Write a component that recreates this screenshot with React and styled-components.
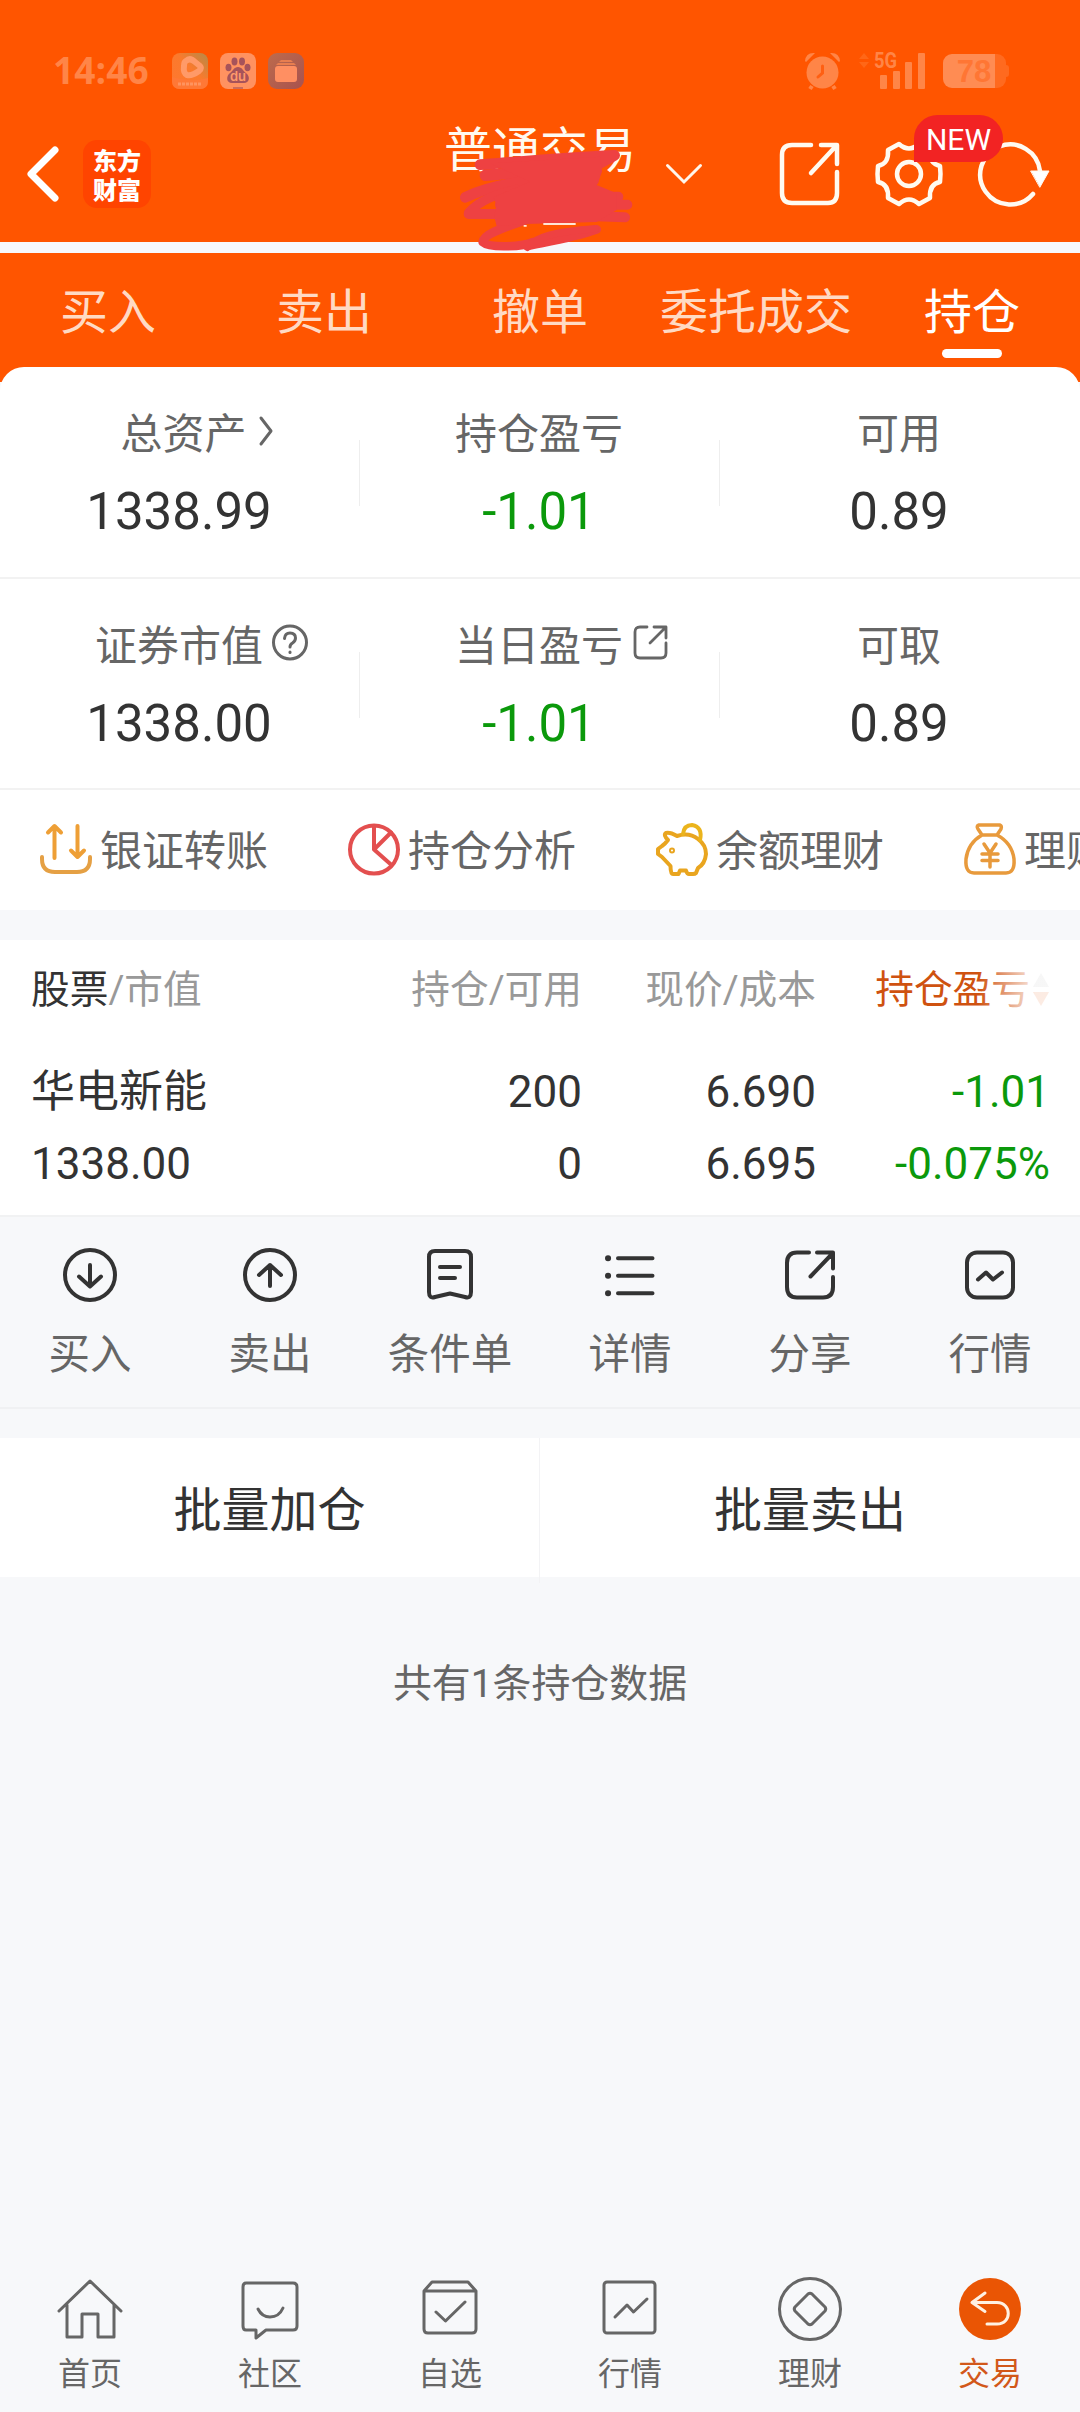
import React from "react";
import styled, { createGlobalStyle } from "styled-components";

const GlobalStyle = createGlobalStyle`
    * {
        box-sizing: border-box;
    }

    body {
        margin: 0;
        background: #f7f8fa;
        color: #333;
        font-family: Roboto, "Noto Sans CJK SC", sans-serif;
    }

    svg {
        display: block;
        flex: none;
        overflow: visible;
    }
`;

const Page = styled.div`
    width: 1080px;
    height: 2412px;
    display: flex;
    flex-direction: column;
    overflow: hidden;
    background: #f7f8fa;
`;

const Header = styled.header`
    height: 242px;
    flex: none;
    background: #ff5500;
    color: #fff;
`;

const StatusBar = styled.div`
    height: 106px;
    padding: 35px 74px 0 53px;
    display: flex;
    align-items: center;
`;

const Clock = styled.span`
    width: 119px;
    padding-bottom: 2px;
    font: 700 37px/36px "Open Sans", sans-serif;
    letter-spacing: 0.1px;
    color: #ff8547;
`;

const AppIcons = styled.div`
    display: flex;
    gap: 12px;
    margin-right: auto;
`;

const StatusIcons = styled.div`
    display: flex;
    align-items: center;
    gap: 17px;
`;

const Battery = styled.div`
    position: relative;
    width: 63px;
    height: 34px;
    padding-right: 1px;
    border-radius: 9px;
    background: linear-gradient(to right, #ff8c53 52px, #ff6a1f 52px);
    color: #ff7634;
    font: 700 31px/35px "Liberation Sans", sans-serif;
    text-align: center;

    &::after {
        content: "";
        position: absolute;
        right: -3px;
        top: 11px;
        width: 3px;
        height: 12px;
        border-radius: 0 3px 3px 0;
        background: #ff6a1f;
    }
`;

const Toolbar = styled.div`
    height: 136px;
    display: grid;
    grid-template-columns: 444px 192px 1fr;
    align-items: center;
`;

const ToolbarLeft = styled.div`
    display: flex;
    align-items: center;
    gap: 24px;
    padding-left: 26px;
`;

const Logo = styled.div`
    width: 68px;
    height: 68px;
    padding-top: 5px;
    border-radius: 14px;
    background: #ff4400;
    font: 900 24px/29px "Noto Sans CJK SC", sans-serif;
    text-align: center;
`;

const Title = styled.div`
    position: relative;
    height: 100px;
    padding-top: 2px;
    font-size: 48px;
    line-height: 50px;
    white-space: nowrap;
    color: #fffaf0;
`;

const Scribble = styled.svg`
    position: absolute;
    left: -14px;
    top: -14px;
    z-index: 2;
`;

const ToolbarRight = styled.div`
    display: flex;
    align-items: center;
    padding-left: 30px;
`;

const ToolIcons = styled.div`
    display: flex;
    align-items: center;
    gap: 36px;
    margin-left: 78px;
`;

const Settings = styled.div`
    position: relative;
`;

const NewBadge = styled.span`
    position: absolute;
    left: 38px;
    top: -26px;
    z-index: 1;
    width: 89px;
    height: 47px;
    border-radius: 24px 24px 24px 0;
    background: #f22323;
    font-size: 30px;
    line-height: 49px;
    text-align: center;
`;

const Strip = styled.div`
    height: 11px;
    flex: none;
    background: #f7f8fb;
`;

const Tabs = styled.nav`
    height: 129px;
    flex: none;
    display: grid;
    grid-template-columns: repeat(5, 1fr);
    background: #ff5500;
`;

const Tab = styled.div`
    display: flex;
    flex-direction: column;
    align-items: center;
    padding-top: 30px;
    font-size: 48px;
    line-height: 60px;
    color: ${(props) => (props.$active ? "#fff" : "#ffdac4")};

    &::after {
        content: "";
        width: 60px;
        height: 9px;
        margin-top: 6px;
        border-radius: 5px;
        background: ${(props) => (props.$active ? "#fff" : "transparent")};
    }
`;

const Card = styled.section`
    flex: none;
    margin-top: -15px;
    border-radius: 24px 24px 0 0;
    background: #fff;
`;

const StatRow = styled.div`
    height: 211.5px;
    display: grid;
    grid-template-columns: 360px 360px 360px;
    border-bottom: 2px solid #f2f2f2;
`;

const Stat = styled.div`
    display: flex;
    flex-direction: column;
    align-items: center;
    padding-top: 43px;
    background: ${(props) =>
        props.$last
            ? "none"
            : "linear-gradient(#eee, #eee) right 73px / 1px 66px no-repeat"};
`;

const StatLabel = styled.div`
    position: relative;
    padding-left: ${(props) => props.$shift || 0}px;
    margin-right: 2px;
    font-size: 42px;
    line-height: 50px;
    color: #666;

    svg {
        position: absolute;
        left: calc(100% + 9px);
        top: 3px;
    }
`;

const StatValue = styled.div`
    margin-top: 22px;
    margin-right: 2px;
    font-size: 51px;
    line-height: 60px;
    color: ${(props) => (props.$down ? "#0b990b" : "#333")};
`;

const Shortcuts = styled.div`
    height: 120px;
    display: flex;
    align-items: center;
    gap: 80px;
    padding: 0 0 2px 40px;
    overflow: hidden;
`;

const Shortcut = styled.div`
    flex: none;
    display: flex;
    align-items: center;
    gap: 8px;
    font-size: 42px;
    line-height: 50px;
    color: #666;

    span {
        padding-top: 5px;
    }
`;

const Holdings = styled.section`
    flex: none;
    height: 277px;
    margin-top: 30px;
    border-bottom: 2px solid #f1f2f3;
    background: #fff;
`;

const HoldingGrid = styled.div`
    display: grid;
    grid-template-columns: 250px 301px 234px 234px;
    padding-left: 31px;
    text-align: right;

    > :first-child {
        text-align: left;
    }
`;

const HoldingHead = styled(HoldingGrid)`
    padding-top: 25px;
    font-size: 38.7px;
    line-height: 50px;
    color: #999;

    b {
        font-weight: 400;
        color: #333;
    }
`;

const SortHead = styled.div`
    position: relative;
    display: flex;
    align-items: center;
    justify-content: flex-end;
    gap: 2px;
    color: #cf5210;

    &::after {
        content: "";
        position: absolute;
        right: -4px;
        top: 0;
        width: 76px;
        height: 50px;
        background: linear-gradient(
            to right,
            rgba(255, 255, 255, 0),
            rgba(255, 255, 255, 0.88) 75%
        );
    }
`;

const HoldingBody = styled(HoldingGrid)`
    padding-top: 41px;
    font-size: 44px;
    line-height: 72px;
`;

const Cell = styled.div`
    color: ${(props) => (props.$down ? "#0b990b" : "#333")};
`;

const Actions = styled.div`
    flex: none;
    height: 192px;
    display: grid;
    grid-template-columns: repeat(6, 1fr);
    border-bottom: 2px solid #f0f1f3;
    font-size: 41.5px;
    line-height: 50px;
    color: #666;
`;

const Action = styled.div`
    display: flex;
    flex-direction: column;
    align-items: center;
    gap: 30px;
    padding-top: 29px;
`;

const Batch = styled.div`
    flex: none;
    height: 139px;
    margin-top: 29px;
    display: grid;
    grid-template-columns: 1fr 1fr;
    background: #fff;
    font-size: 48px;
    line-height: 145px;
    text-align: center;

    div:first-child {
        border-right: 1px solid #f3f3f5;
    }
`;

const Summary = styled.p`
    margin: 82px 0 auto;
    font-size: 38.9px;
    line-height: 50px;
    text-align: center;
    color: #666;
`;

const BottomNav = styled.nav`
    flex: none;
    height: 135px;
    display: grid;
    grid-template-columns: repeat(6, 1fr);
    font-size: 32px;
    line-height: 40px;
`;

const NavItem = styled.div`
    display: flex;
    flex-direction: column;
    align-items: center;
    gap: 13px;
    color: ${(props) => (props.$active ? "#d2581a" : "#666")};
`;

const Icon = ({ size = 54, width = 4, color = "currentColor", children }) => (
    <svg
        width={size}
        height={size}
        viewBox={`0 0 ${size} ${size}`}
        fill="none"
        stroke={color}
        strokeWidth={width}
        strokeLinecap="round"
        strokeLinejoin="round"
    >
        {children}
    </svg>
);

const VideoApp = () => (
    <svg width="36" height="36" viewBox="0 0 36 36">
        <defs>
            <linearGradient id="video" x1="0" y1="1" x2="1" y2="0">
                <stop offset="0" stopColor="#ff7730" />
                <stop offset="0.55" stopColor="#fb7a2c" />
                <stop offset="1" stopColor="#b58a48" />
            </linearGradient>
        </defs>
        <rect width="36" height="36" rx="8" fill="url(#video)" />
        <path
            d="M14 8Q18 4 23 9L28 13Q30 15 27 18Q20 23 15 22Q11 20 12 13Q12 9 14 8Z"
            fill="none"
            stroke="#ff9a68"
            strokeWidth="6"
            strokeLinejoin="round"
        />
        <path d="M0 24Q18 30 36 25V28Q36 36 28 36H8Q0 36 0 28Z" fill="#ff7836" />
        <path
            d="M6 31H30"
            stroke="#ff935f"
            strokeWidth="3"
            strokeDasharray="3 1"
        />
    </svg>
);

const BaiduApp = () => (
    <svg width="36" height="36" viewBox="0 0 36 36">
        <rect width="36" height="36" rx="8" fill="#ff9260" />
        <g fill="#a7535a">
            <ellipse cx="14.5" cy="8.5" rx="3" ry="4" />
            <ellipse cx="22" cy="8.5" rx="3" ry="4" />
            <ellipse cx="8.5" cy="14.5" rx="3" ry="3.8" />
            <ellipse cx="27.5" cy="14.5" rx="3" ry="3.8" />
            <path d="M18 14C22 14 23 18 26 20C31 24 29 30 24 30H12C6 30 6 23 10 20C13 18 14 14 18 14Z" />
            <path d="M13 34H23V36H13Z" opacity="0.6" />
        </g>
        <text
            x="18"
            y="28"
            textAnchor="middle"
            fontFamily="Inter"
            fontWeight="600"
            fontSize="13"
            fill="#ff9a6b"
        >
            du
        </text>
    </svg>
);

const FilesApp = () => (
    <svg width="36" height="36" viewBox="0 0 36 36">
        <defs>
            <linearGradient id="files" x1="0" y1="0" x2="1" y2="1">
                <stop offset="0" stopColor="#bd6b4c" />
                <stop offset="1" stopColor="#a8524f" />
            </linearGradient>
        </defs>
        <rect width="36" height="36" rx="9" fill="url(#files)" />
        <path d="M13 7H23L25 9H11ZM10 10H26L28 12H8Z" fill="#e87e50" />
        <rect x="7" y="13" width="22" height="16" rx="3" fill="#ff8f62" />
    </svg>
);

const AlarmIcon = () => (
    <svg width="38" height="38" viewBox="0 0 38 38">
        <g fill="#ff8547">
            <circle cx="18.5" cy="20.5" r="16" />
            <path d="M1 9Q2 0 11 1L2 10ZM36 9Q35 0 26 1L35 10Z" />
        </g>
        <path d="M8 34L6 37M29 34L31 37" stroke="#ff8547" strokeWidth="4" />
        <path
            d="M18.5 14V21L14 25"
            fill="none"
            stroke="#ff5f12"
            strokeWidth="3"
            strokeLinecap="round"
        />
    </svg>
);

const SignalIcon = () => (
    <svg width="67" height="38" viewBox="0 0 67 38">
        <path d="M0 7L5 1L10 7ZM0 10L5 16L10 10Z" fill="#ff6717" />
        <text
            x="15"
            y="16"
            fontFamily="Roboto"
            fontWeight="700"
            fontSize="22"
            textLength="23"
            lengthAdjust="spacingAndGlyphs"
            fill="#ff8547"
        >
            5G
        </text>
        <g fill="#ff8547">
            <rect x="21" y="23" width="7" height="14" rx="1" />
            <rect x="34" y="19" width="7" height="18" rx="1" />
            <rect x="46" y="10" width="7" height="27" rx="1" />
            <rect x="59" y="1" width="7" height="36" rx="1" />
        </g>
    </svg>
);

// hand-drawn mark that hides the account number under the title
const AccountScribble = () => (
    <Scribble width="300" height="150" viewBox="0 0 900 450">
        <g
            fill="none"
            stroke="#ee4142"
            strokeLinecap="round"
            strokeLinejoin="round"
        >
            <path d="M150 164C280 154 390 144 554 136L510 160" strokeWidth="32" />
            <path d="M166 196L500 168L490 210L300 200" strokeWidth="34" />
            <path d="M106 262C150 240 220 222 300 212" strokeWidth="32" />
            <path d="M116 308C150 270 200 252 260 238" strokeWidth="28" />
            <path d="M116 312H300L585 322" strokeWidth="30" />
            <path d="M210 284L592 284M230 260H565" strokeWidth="30" />
            <path
                d="M158 396C160 370 230 350 300 326M158 396C180 416 280 410 310 396M292 408C380 390 440 380 500 358"
                strokeWidth="26"
            />
            <path d="M292 412C320 380 370 366 496 356" strokeWidth="22" />
        </g>
        <path
            d="M180 160L510 140L516 185L500 225L560 250V300L500 336L290 342L200 348L192 318L200 285L190 262L300 215Z"
            fill="#ee4142"
        />
        <path d="M340 339H437V345H340ZM281 345H290V350H281Z" fill="#ffe6d6" />
    </Scribble>
);

const HelpIcon = () => (
    <Icon size={36} width={3}>
        <circle cx="18" cy="17.500" r="16.5" />
        <path d="M12.500 13.500Q13 8 18 8Q23.500 8 23.500 13Q23.500 16 20.500 18Q18 19.500 18 22" />
        <path d="M18 27V27.500" />
    </Icon>
);

const PopOutIcon = () => (
    <Icon size={36} width={2.8}>
        <path d="M15 2H8Q3 2 3 7V28Q3 33 8 33H29Q34 33 34 28V18M22 2H34V13M33 3L18 18" />
    </Icon>
);

const ArrowIcon = () => (
    <Icon size={36} width={3}>
        <path d="M5 5L15 18L5 31" />
    </Icon>
);

const TransferIcon = () => (
    <Icon size={52} color="#e5a044">
        <path d="M2 34V36Q2 49 15 49H37Q50 49 50 36V34" />
        <path
            d="M14.500 35V4M8 9.500L14.500 3L21 9.500M37.500 3V34M31 27.500L37.500 34L44 27.500"
            stroke="#ee9f36"
        />
    </Icon>
);

const PieIcon = () => (
    <Icon size={52} color="#e34f4f">
        <circle cx="26" cy="26.500" r="24" />
        <path d="M26 3V26.500L43 9.500M26 26.500L43.500 42" />
    </Icon>
);

const PiggyIcon = () => (
    <Icon size={52} color="#e9a51f">
        <path d="M12 17Q7 12 10 10Q14 9 21 13Q33 9 42 16Q50 22 50 31Q49 41 42 45L40 50Q39 51 37 51H33Q31 51 30 47.500H24L22.500 51H17Q14.500 51 14.500 43L6 34L2 31V26L6 23Q9 21 12 17Z" />
        <path d="M27 11Q28 2 36 2Q47 4 44 17" stroke="#ebb41c" />
        <circle cx="16" cy="27.500" r="1" />
    </Icon>
);

const BagIcon = () => (
    <Icon size={52} width={3.5} color="#e89a3c">
        <path d="M15 2H36Q38 3 37 6L33 12H18L14 6Q12 3 15 2ZM18 12Q4 20 2 36Q1 50 10 50H42Q51 50 50 36Q48 20 33 12" />
        <path d="M20 21L26 30L32 21M18 31H34M18 37.500H34M26 31V44" />
    </Icon>
);

const stats = [
    [
        { label: "总资产", value: "1338.99", shift: 9, icon: <ArrowIcon /> },
        { label: "持仓盈亏", value: "-1.01", down: true },
        { label: "可用", value: "0.89" },
    ],
    [
        { label: "证券市值", value: "1338.00", icon: <HelpIcon /> },
        { label: "当日盈亏", value: "-1.01", down: true, icon: <PopOutIcon /> },
        { label: "可取", value: "0.89" },
    ],
];

const shortcuts = [
    { label: "银证转账", icon: <TransferIcon /> },
    { label: "持仓分析", icon: <PieIcon /> },
    { label: "余额理财", icon: <PiggyIcon /> },
    { label: "理财", icon: <BagIcon /> },
];

const actions = [
    {
        label: "买入",
        icon: (
            <>
                <circle cx="27" cy="29" r="25" />
                <path d="M27 19V40M16 30.500L27 40.500L38 30.500" />
            </>
        ),
    },
    {
        label: "卖出",
        icon: (
            <>
                <circle cx="27" cy="29" r="25" />
                <path d="M27 40V19M16 29L27 19L38 29" />
            </>
        ),
    },
    {
        label: "条件单",
        icon: (
            <path d="M12 5H42Q48 5 48 11V46Q48 53 42 51L27 47.500L12 51Q6 53 6 46V11Q6 5 12 5ZM17 21H37M17 32H32" />
        ),
    },
    {
        label: "详情",
        icon: (
            <>
                <path d="M15 12.300H49.500M15 29.700H49.500M15 47.300H49.500" />
                <path
                    d="M5 12.300H5.100M5 29.700H5.100M5 47.300H5.100"
                    strokeWidth="6"
                />
            </>
        ),
    },
    {
        label: "分享",
        icon: (
            <path d="M26 6.500H14Q4 6.500 4 17V41Q4 51.500 14 51.500H40Q50 51.500 50 41V31M34 6.500H50V22.500M49 8L27.500 30.500" />
        ),
    },
    {
        label: "行情",
        icon: (
            <>
                <rect x="4" y="6.500" width="46" height="45" rx="10" />
                <path d="M15 33.500L23 26.500L30 33.500L39 26.500" />
            </>
        ),
    },
];

const navItems = [
    {
        label: "首页",
        icon: <path d="M1 34L32 4L63 34M9 28V60H24V37H40V60H56V28" />,
    },
    {
        label: "社区",
        icon: (
            <>
                <path d="M8 6H55Q59 6 59 10V49Q59 53 55 53H28L18 61V53H8Q5 53 5 49V10Q5 6 8 6Z" />
                <path d="M20 32Q24 40 32 40Q41 40 45 31" />
            </>
        ),
    },
    {
        label: "自选",
        icon: (
            <path d="M14 5H50L58 14V52Q58 56 54 56H10Q6 56 6 52V14ZM6 14H58M18 35L27.500 44L47 25" />
        ),
    },
    {
        label: "行情",
        icon: (
            <>
                <rect x="6" y="5" width="51" height="51" rx="3" />
                <path d="M17 40L29 28L35.500 35L49 22" />
            </>
        ),
    },
    {
        label: "理财",
        icon: (
            <>
                <circle cx="32" cy="32" r="30.500" />
                <path d="M34 17L47 30Q48.500 32 47 34L34 47Q32 48.500 30 47L17 34Q15.500 32 17 30L30 17Q32 15.500 34 17Z" />
            </>
        ),
    },
    {
        label: "交易",
        active: true,
        icon: (
            <>
                <circle cx="32" cy="32" r="31" fill="#ea5504" stroke="none" />
                <path
                    d="M27 16L14 25.500L27 34.500M14 25.500H39C54 26 54 47 39 47H29"
                    stroke="#fff1e2"
                />
            </>
        ),
    },
];

const App = () => {
    return (
        <Page>
            <GlobalStyle />
            <Header>
                <StatusBar>
                    <Clock>14:46</Clock>
                    <AppIcons>
                        <VideoApp />
                        <BaiduApp />
                        <FilesApp />
                    </AppIcons>
                    <StatusIcons>
                        <AlarmIcon />
                        <SignalIcon />
                        <Battery>78</Battery>
                    </StatusIcons>
                </StatusBar>
                <Toolbar>
                    <ToolbarLeft>
                        <svg width="33" height="56" viewBox="0 0 33 56">
                            <path
                                d="M29 4L5 28L29 52"
                                fill="none"
                                stroke="#fff"
                                strokeWidth="7"
                                strokeLinecap="round"
                                strokeLinejoin="round"
                            />
                        </svg>
                        <Logo>
                            东方
                            <br />
                            财富
                        </Logo>
                    </ToolbarLeft>
                    <Title>
                        普通交易
                        <AccountScribble />
                    </Title>
                    <ToolbarRight>
                        <svg width="36" height="20" viewBox="0 0 36 20">
                            <path
                                d="M1.500 1.500L18 18L34.500 1.500"
                                fill="none"
                                stroke="#fff6ec"
                                strokeWidth="3"
                                strokeLinecap="round"
                            />
                        </svg>
                        <ToolIcons>
                            <Icon size={60} color="#fffaf0" width={4.5}>
                                <path d="M31 1H12Q2 1 2 11V49Q2 59 12 59H48Q57 59 57 49V28M41 1H57V20M56 2L31 29" />
                            </Icon>
                            <Settings>
                                <Icon size={66} color="#fffaf0" width={4.5}>
                                    <g transform="translate(33 33)">
                                        <path d="M-10 -30Q0 -21 10 -30L21 -24Q20 -10 31 -8Q32 0 31 8Q20 10 21 24L10 30Q0 21 -10 30L-21 24Q-20 10 -31 8Q-32 0 -31 -8Q-20 -10 -21 -24Z" />
                                        <circle r="12" />
                                    </g>
                                </Icon>
                                <NewBadge>NEW</NewBadge>
                            </Settings>
                            <Icon size={66} color="#fffaf0" width={4.5}>
                                <path d="M55 53A30 30 0 1 1 62 30" />
                                <path
                                    d="M53 30H71L62 46Z"
                                    fill="#fff"
                                    strokeWidth="1"
                                />
                            </Icon>
                        </ToolIcons>
                    </ToolbarRight>
                </Toolbar>
            </Header>
            <Strip />
            <Tabs>
                {["买入", "卖出", "撤单", "委托成交", "持仓"].map((name) => (
                    <Tab key={name} $active={name === "持仓"}>
                        {name}
                    </Tab>
                ))}
            </Tabs>
            <Card>
                {stats.map((row, i) => (
                    <StatRow key={i}>
                        {row.map((item, j) => (
                            <Stat key={item.label} $last={j === 2}>
                                <StatLabel $shift={item.shift}>
                                    {item.label}
                                    {item.icon}
                                </StatLabel>
                                <StatValue $down={item.down}>
                                    {item.value}
                                </StatValue>
                            </Stat>
                        ))}
                    </StatRow>
                ))}
                <Shortcuts>
                    {shortcuts.map((item) => (
                        <Shortcut key={item.label}>
                            {item.icon}
                            <span>{item.label}</span>
                        </Shortcut>
                    ))}
                </Shortcuts>
            </Card>
            <Holdings>
                <HoldingHead>
                    <div>
                        <b>股票</b>/市值
                    </div>
                    <div>持仓/可用</div>
                    <div>现价/成本</div>
                    <SortHead>
                        持仓盈亏
                        <svg width="18" height="36" viewBox="0 0 18 36">
                            <path d="M1 15L9 1L17 15Z" fill="#bbb" />
                            <path d="M1 20L9 34L17 20Z" fill="#e8601c" />
                        </svg>
                    </SortHead>
                </HoldingHead>
                <HoldingBody>
                    <Cell>
                        华电新能
                        <br />
                        1338.00
                    </Cell>
                    <Cell>
                        200
                        <br />0
                    </Cell>
                    <Cell>
                        6.690
                        <br />
                        6.695
                    </Cell>
                    <Cell $down>
                        -1.01
                        <br />
                        -0.075%
                    </Cell>
                </HoldingBody>
            </Holdings>
            <Actions>
                {actions.map((item) => (
                    <Action key={item.label}>
                        <Icon color="#333">{item.icon}</Icon>
                        {item.label}
                    </Action>
                ))}
            </Actions>
            <Batch>
                <div>批量加仓</div>
                <div>批量卖出</div>
            </Batch>
            <Summary>共有1条持仓数据</Summary>
            <BottomNav>
                {navItems.map((item, i) => (
                    <NavItem key={i} $active={item.active}>
                        <Icon size={64} width={3}>
                            {item.icon}
                        </Icon>
                        {item.label}
                    </NavItem>
                ))}
            </BottomNav>
        </Page>
    );
};

export default App;
